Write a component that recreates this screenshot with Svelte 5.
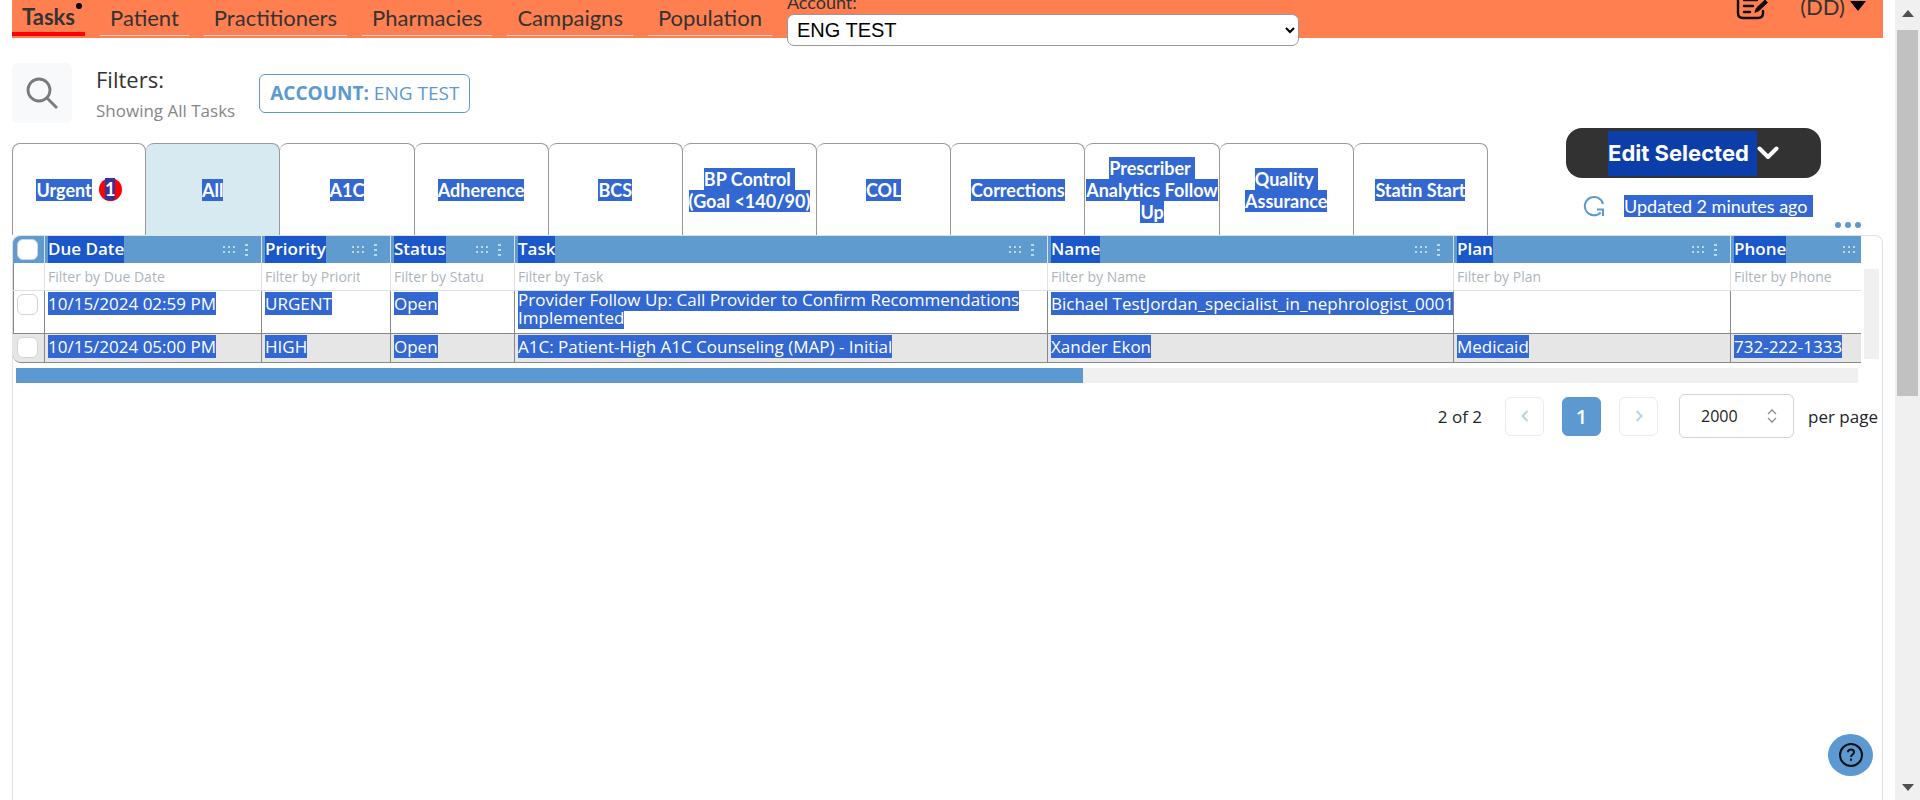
<script>
  const nav = ['Tasks', 'Patient', 'Practitioners', 'Pharmacies', 'Campaigns', 'Population'];
  const tabs = [
    ['Urgent'], ['All'], ['A1C'], ['Adherence'], ['BCS'],
    ['BP Control ', '(Goal <140/90)'], ['COL'], ['Corrections'],
    ['Prescriber ', 'Analytics Follow', 'Up'], ['Quality ', 'Assurance'], ['Statin Start']
  ];
  const columns = [
    { name: 'Due Date', width: 217 },
    { name: 'Priority', width: 129 },
    { name: 'Status', width: 124 },
    { name: 'Task', width: null },
    { name: 'Name', width: 406 },
    { name: 'Plan', width: 277 },
    { name: 'Phone', width: 130 }
  ];
  const rows = [
    ['10/15/2024 02:59 PM', 'URGENT', 'Open', 'Provider Follow Up: Call Provider to Confirm Recommendations Implemented', 'Bichael TestJordan_specialist_in_nephrologist_0001', '', ''],
    ['10/15/2024 05:00 PM', 'HIGH', 'Open', 'A1C: Patient-High A1C Counseling (MAP) - Initial', 'Xander Ekon', 'Medicaid', '732-222-1333']
  ];
</script>

<div class="shell">
  <div class="page">
    <header>
      <nav>
        {#each nav as item, i}
          <a href="#{item}" class:current={i === 0}>{item}{#if i === 0}<i class="dot"></i>{/if}</a>
        {/each}
      </nav>
      <div class="account">
        <label for="account">Account:</label>
        <select id="account"><option>ENG TEST</option></select>
      </div>
      <div class="user">
        <button class="plain" aria-label="Notes">
          <svg width="34" height="30" viewBox="0 0 34 30" fill="none" stroke="#111" stroke-width="2.4" stroke-linecap="round" stroke-linejoin="round">
            <path d="M27 6C27 4 25 2 22 2H7C4 2 2 4 2 7v15c0 3 2 5 5 5h15c3 0 5-2 5-5v-2" />
            <path d="M8 9h13M8 15h9M8 21h6" />
            <path d="M19 21l1.500-4L29 9l2.500 2.500L23 19.500z" fill="#111" stroke-width="1" />
          </svg>
        </button>
        <button class="plain who">(DD)<svg width="16" height="10" viewBox="0 0 16 10"><path d="M0 0h16L8 10z" fill="#000" /></svg></button>
      </div>
    </header>

    <section class="filters">
      <button class="search" aria-label="Search">
        <svg width="32" height="32" viewBox="0 0 32 32" fill="none" stroke="#7a7a7a" stroke-width="2.800"><circle cx="13" cy="13" r="11" /><path d="M20.500 20.500L31 31" /></svg>
      </button>
      <div class="summary">
        <div class="title">Filters:</div>
        <div class="sub">Showing All Tasks</div>
      </div>
      <button class="chip"><b>ACCOUNT:</b> ENG TEST</button>
    </section>

    <section class="toolbar">
      <div class="tabs" role="tablist">
        {#each tabs as lines, i}
          <button role="tab" class:active={i === 1} aria-selected={i === 1}>
            <span>{#each lines as line, n}{#if n}<br />{/if}<mark>{line}</mark>{/each}</span>
            {#if i === 0}<span class="badge"><mark>1</mark></span>{/if}
          </button>
        {/each}
      </div>
      <div class="actions">
        <button class="edit"><mark>Edit Selected</mark><svg width="22" height="14" viewBox="0 0 22 14" fill="none" stroke="#fff" stroke-width="4" stroke-linecap="round" stroke-linejoin="round"><path d="M2.500 2.500L11 11l8.500-8.500" /></svg></button>
        <div class="updated">
          <svg width="22" height="22" viewBox="0 0 22 22" fill="none" stroke="#5c99d0" stroke-width="2"><path d="M20 9a9.200 9.200 0 1 0-2.300 8.500" /><path d="M14 14.500h6V21" /></svg>
          <mark>Updated 2 minutes ago</mark>
        </div>
        <button class="plain more" aria-label="More">
          <svg width="26" height="6" viewBox="0 0 26 6" fill="#5c99d0"><circle cx="3" cy="3" r="3" /><circle cx="13" cy="3" r="3" /><circle cx="23" cy="3" r="3" /></svg>
        </button>
      </div>
    </section>

    <main>
      <div class="grid">
        <div class="sheet">
          <table>
            <colgroup>
              <col style="width: 32px" />
              {#each columns as c}<col style:width={c.width ? c.width + 'px' : 'auto'} />{/each}
            </colgroup>
            <thead>
              <tr class="heads">
                <th><input type="checkbox" aria-label="Select all rows" /></th>
                {#each columns as c, i}
                  <th>
                    <div class="head">
                      <mark>{c.name}</mark>
                      <svg class="grip" width="12" height="7" viewBox="0 0 12 7" fill="#bcd8f0"><path d="M0 0h2v2H0zM5 0h2v2H5zM10 0h2v2h-2zM0 5h2v2H0zM5 5h2v2H5zM10 5h2v2h-2z" /></svg>
                      {#if i < 6}<svg class="dots" width="3" height="12" viewBox="0 0 3 12" fill="#bcd8f0"><path d="M0 0h3v2H0zM0 5h3v2H0zM0 10h3v2H0z" /></svg>{/if}
                    </div>
                  </th>
                {/each}
              </tr>
              <tr class="inputs">
                <td></td>
                {#each columns as c}
                  <td><input type="text" placeholder="Filter by {c.name}" aria-label="Filter by {c.name}" /></td>
                {/each}
              </tr>
            </thead>
            <tbody>
              {#each rows as row, r}
                <tr class="data">
                  <td><input type="checkbox" aria-label="Select row {r + 1}" /></td>
                  {#each row as cell, i}
                    <td class:wrap={i === 3 && r === 0}>{#if cell}<mark>{cell}</mark>{/if}</td>
                  {/each}
                </tr>
              {/each}
            </tbody>
          </table>
        </div>
        <div class="vtrack"></div>
      </div>
      <div class="htrack"><div></div></div>
      <footer>
        <span class="count">2 of 2</span>
        <button class="step" aria-label="Previous page"><svg width="8" height="12" viewBox="0 0 8 12"><path d="M6.500 1L1.500 6l5 5" /></svg></button>
        <button class="step on">1</button>
        <button class="step" aria-label="Next page"><svg width="8" height="12" viewBox="0 0 8 12"><path d="M1.500 1l5 5-5 5" /></svg></button>
        <div class="size">
          <select id="size"><option>2000</option></select>
          <svg width="10" height="14" viewBox="0 0 10 14" fill="none" stroke="#868e96" stroke-width="1.300"><path d="M1 5l4-4 4 4M1 9l4 4 4-4" /></svg>
        </div>
        <label for="size">per page</label>
      </footer>
    </main>
  </div>

  <div class="scrollbar">
    <svg width="12" height="7" viewBox="0 0 12 7"><path d="M0 7h12L6 0z" fill="#505050" /></svg>
    <div class="thumb"></div>
    <svg width="12" height="7" viewBox="0 0 12 7"><path d="M0 0h12L6 7z" fill="#505050" /></svg>
  </div>

  <button class="help" aria-label="Help">
    <svg width="24" height="24" viewBox="0 0 24 24" fill="none" stroke="#0b1014" stroke-width="2"><circle cx="12" cy="12" r="11" /><path d="M9 9.200C9 7.500 10.300 6.500 12 6.500s3 1 3 2.700c0 2.200-3 2.300-3 4.800" /><path d="M12 15.500v2.200" /></svg>
  </button>
</div>

<style>
  :global(body) { margin: 0; overflow: hidden; }
  * { box-sizing: border-box; }
  .shell {
    display: flex;
    height: 100vh;
    overflow: hidden;
    background: #fff;
    color: #333;
    font-family: 'Open Sans', 'Noto Sans', sans-serif;
  }
  button, select, input { font: inherit; color: inherit; margin: 0; }
  button { cursor: pointer; }
  mark { background: #3367d1; color: #fff; }
  .plain { padding: 0; border: 0; background: none; }
  .page { flex: 1; min-width: 0; display: flex; flex-direction: column; padding: 0 12px; }

  header {
    display: flex;
    align-items: flex-start;
    height: 38px;
    background: #ff7f50;
    font-family: Lato, sans-serif;
    font-size: 22px;
  }
  nav { display: flex; gap: 15px; margin-right: 15px; }
  nav a {
    position: relative;
    height: 36px;
    padding: 0 10px;
    border-bottom: 1px solid #e8cfc6;
    line-height: 36px;
    color: #333;
    text-decoration: none;
  }
  nav a.current { border-bottom: 4px solid #f00; font-weight: 700; line-height: 33px; }
  .dot { position: absolute; right: 3px; top: 3px; width: 6px; height: 6px; border-radius: 50%; background: #000; }
  .account { width: 512px; margin-top: -10px; }
  .account label { display: block; height: 24px; line-height: 24px; font-size: 18px; }
  .account select {
    display: block;
    width: 100%;
    height: 32px;
    padding: 0 5px;
    border: 1px solid #999;
    border-radius: 7px;
    background: #fff;
    color: #000;
    font-family: 'Liberation Sans', Arial, sans-serif;
    font-size: 20px;
  }
  .user { display: flex; gap: 30px; margin: -9px 17px 0 auto; }
  .who { display: flex; align-items: center; gap: 5px; height: 30px; font-size: 22px; }

  .filters { display: flex; align-items: center; height: 60px; margin-top: 25px; }
  .search { display: grid; place-items: center; width: 60px; height: 60px; padding: 0; border: 0; border-radius: 6px; background: #f8f9fb; }
  .summary { margin: 0 24px; }
  .title { font-size: 22px; line-height: 36px; }
  .sub { font-size: 17px; line-height: 28px; color: #868686; }
  .chip { height: 39px; padding: 0 10px; border: 1px solid #5c99d0; border-radius: 6px; background: #fff; color: #5c99d0; font-size: 19px; }

  .toolbar { display: flex; align-items: flex-end; height: 107px; margin-top: 5px; }
  .tabs { flex: 1; display: grid; grid-template-columns: repeat(11, minmax(0, 1fr)); height: 92px; }
  .tabs button {
    display: flex;
    align-items: center;
    justify-content: center;
    gap: 7px;
    padding: 0;
    border: 1px solid #999;
    border-width: 1px 1px 0 0;
    border-radius: 8px 8px 0 0;
    background: #fff;
    font-family: Lato, sans-serif;
    font-size: 18px;
    font-weight: 700;
    line-height: 22px;
    white-space: pre;
  }
  .tabs button:first-child { border-left-width: 1px; }
  .tabs .active { background: #d7eaf1; }
  .badge { width: 23px; height: 23px; border-radius: 50%; background: #f00; text-align: center; }
  .badge mark { background: #33339f; }
  .actions { width: 395px; height: 107px; padding: 0 22px 0 78px; }
  .edit {
    display: flex;
    align-items: center;
    justify-content: center;
    width: 255px;
    height: 50px;
    border: 0;
    border-radius: 16px;
    background: #323232;
    color: #fff;
    font-family: Inter, sans-serif;
    font-size: 22px;
    font-weight: 700;
  }
  .edit mark { padding-right: 8px; background: #0b3ea8; line-height: 45px; display: block; }
  .updated { display: flex; align-items: center; gap: 19px; height: 24px; margin-top: 16px; padding-left: 17px; font-family: Lato, sans-serif; font-size: 18px; white-space: nowrap; }
  .updated mark { padding-right: 5px; }
  .more { display: block; height: 6px; margin: 4px 0 0 auto; line-height: 0; }

  main { flex: 1; border: 1px solid #dee2e6; border-bottom: 0; border-radius: 8px 8px 0 0; }
  .grid { display: flex; gap: 3px; padding-right: 3px; }
  .sheet { flex: 1; min-width: 0; overflow: hidden; border-bottom: 1px solid #888; border-radius: 8px 0 0 8px; box-shadow: inset 1px 0 #888; }
  .vtrack { width: 15px; margin: 33px 0 4px; background: #f0f0f0; }
  table { width: 100%; table-layout: fixed; border-collapse: separate; border-spacing: 0; font-size: 17px; }
  th, td { padding: 0 3px; text-align: left; white-space: nowrap; overflow: hidden; border-right: 1px solid #dee2e6; }
  th:first-child, td:first-child { padding-left: 4px; }
  th:last-child, td:last-child { border-right: 0; }
  .heads th { height: 27px; background: #5f9bcf; }
  .head { display: flex; align-items: center; height: 27px; gap: 10px; padding-right: 10px; font-weight: 600; }
  .head mark { background: #1a57c8; line-height: 26px; height: 27px; }
  .grip { margin-left: auto; }
  th:last-child .head { padding-right: 3px; }
  .inputs td { height: 28px; border-bottom: 1px solid #dee2e6; }
  .inputs input { display: block; width: 100%; height: 26px; padding: 0; border: 0; outline: 0; background: none; font-size: 14px; }
  .inputs td:nth-child(3), .inputs td:nth-child(4) { padding-right: 30px; }
  .inputs input::placeholder { color: #adb5bd; opacity: 1; }
  .data td { height: 43px; padding-top: 1px; border-right-color: #888; vertical-align: top; line-height: 24px; }
  .data:first-child td { border-bottom: 1px solid #888; }
  .data:last-child td { height: 28px; background: #e6e6e6; }
  .data td.wrap { padding-top: 0; white-space: normal; line-height: 18px; }
  input[type='checkbox'] {
    display: block;
    appearance: none;
    width: 21px;
    height: 21px;
    border: 1px solid #ced4da;
    border-radius: 6px;
    background: #fff;
  }
  .data input { margin-top: 2px; }

  .htrack { height: 15px; margin: 5px 24px 0 3px; background: #f0f0f0; }
  .htrack div { width: 57.9%; height: 15px; background: #5c99d0; }
  footer { display: flex; align-items: center; justify-content: flex-end; height: 44px; margin-top: 11px; padding-right: 4px; color: #212529; font-size: 17px; }
  .step { display: grid; place-items: center; width: 39px; height: 39px; margin-right: 18px; padding: 0; border: 1px solid #e9ecef; border-radius: 6px; background: #fff; }
  .step svg { fill: none; stroke: #b5d2ee; stroke-width: 2; }
  .step.on { border-color: #5c99d0; background: #5c99d0; color: #fff; font-size: 20px; font-weight: 600; }
  .count { margin-right: 23px; }
  .size { display: grid; align-items: center; width: 115px; height: 44px; margin: 0 14px 0 3px; }
  .size select { grid-area: 1 / 1; width: 100%; height: 44px; padding: 0 21px; appearance: none; border: 1px solid #ced4da; border-radius: 6px; background: #fff; font-size: 16px; }
  .size svg { grid-area: 1 / 1; justify-self: end; margin-right: 17px; pointer-events: none; }

  .scrollbar { display: flex; flex-direction: column; align-items: center; width: 25px; padding: 10px 0 9px; background: #f0f0f0; }
  .thumb { width: 21px; height: 366px; margin: 13px 0 auto; background: #c1c1c1; }
  .help { position: fixed; right: 47px; bottom: 24px; display: grid; place-items: center; width: 45px; height: 42px; padding: 0; border: 0; border-radius: 50%; background: #5c99d0; }
</style>
